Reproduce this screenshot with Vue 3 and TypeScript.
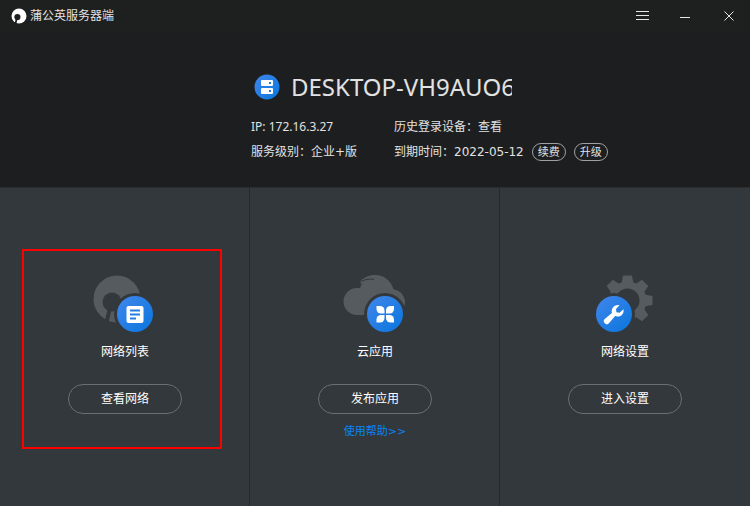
<script setup lang="ts">
interface Panel {
  id: string
  title: string
  action: string
  help?: string
  highlighted?: boolean
}

const hostName = 'DESKTOP-VH9AUO6'

const panels: Panel[] = [
  { id: 'list', title: '网络列表', action: '查看网络', highlighted: true },
  { id: 'cloud', title: '云应用', action: '发布应用', help: '使用帮助>>' },
  { id: 'settings', title: '网络设置', action: '进入设置' },
]

const gearTeeth = [0, 45, 90, 135, 180, 225, 270, 315]
</script>

<template>
  <div class="window">
    <header class="titlebar">
      <svg class="logo" viewBox="0 0 16 16" aria-hidden="true">
        <circle cx="8" cy="8" r="7.5" fill="#fff" />
        <circle cx="6.4" cy="9" r="3.1" fill="#1e2020" />
        <path d="M5.6 11 4.4 16" stroke="#1e2020" stroke-width="1.8" />
      </svg>
      <h1 class="app-name">蒲公英服务器端</h1>
      <nav class="controls" aria-label="窗口">
        <button type="button" aria-label="菜单">
          <svg viewBox="0 0 14 14"><path d="M0 2.5h13M0 6.5h13M0 10.5h13" /></svg>
        </button>
        <button type="button" aria-label="最小化">
          <svg viewBox="0 0 14 14"><path d="M1 8.5h10" /></svg>
        </button>
        <button type="button" aria-label="关闭">
          <svg viewBox="0 0 14 14"><path d="M2.5 2.5l9 9M11.5 2.5l-9 9" /></svg>
        </button>
      </nav>
    </header>

    <section class="host">
      <div class="host-head">
        <svg class="host-icon" viewBox="0 0 26 26" aria-hidden="true">
          <defs>
            <linearGradient id="host-blue" x1="0" y1="0" x2="1" y2="1">
              <stop offset="0" stop-color="#4286ec" />
              <stop offset="1" stop-color="#0876dc" />
            </linearGradient>
          </defs>
          <circle cx="13" cy="13" r="12.5" fill="url(#host-blue)" />
          <rect x="7" y="6" width="12" height="6" rx="1" fill="#fff" />
          <rect x="7" y="14" width="12" height="6" rx="1" fill="#fff" />
          <path d="M15 9h2M15 17h2" stroke="#1c7ae0" stroke-width="2" />
        </svg>
        <h2 class="host-name">{{ hostName }}</h2>
      </div>
      <div class="info">
        <p>IP: 172.16.3.27</p>
        <p>历史登录设备：<a href="#history">查看</a></p>
        <p>服务级别：<span class="wide">企业+版</span></p>
        <p class="expiry">
          <span>到期时间：<time class="wide" datetime="2022-05-12">2022-05-12</time></span>
          <button type="button" class="tag">续费</button>
          <button type="button" class="tag">升级</button>
        </p>
      </div>
    </section>

    <main class="panels">
      <section v-for="panel in panels" :key="panel.id" class="panel">
        <div v-if="panel.highlighted" class="highlight"></div>
        <svg class="panel-icon" viewBox="0 0 70 66" aria-hidden="true">
          <defs>
            <linearGradient :id="`blue-${panel.id}`" x1="0" y1="0" x2="1" y2="1">
              <stop offset="0" stop-color="#4286ec" />
              <stop offset="1" stop-color="#0876dc" />
            </linearGradient>
          </defs>

          <template v-if="panel.id === 'list'">
            <circle class="shape" cx="27" cy="29" r="23.5" />
            <circle class="cut" cx="22" cy="32" r="9.5" />
            <path class="cut-line" d="M20 38 16 54" stroke-width="4" />
            <circle class="cut" cx="45" cy="44" r="21" />
            <circle cx="45" cy="44" r="18" fill="url(#blue-list)" />
            <rect x="36.5" y="36" width="17" height="17" rx="2" fill="#fff" />
            <path d="M40 40.5h10M40 44.5h10M40 48.5h6" stroke="#247de4" stroke-width="2" />
          </template>

          <template v-else-if="panel.id === 'cloud'">
            <path
              class="shape"
              d="M17 45a13.5 13.5 0 0 1 0-27c1 0 2 0 3 .3C22 11 28 5.500 35.500 5.500 44 5.500 51 11 53.500 19.300 60.500 20.500 65 26 65 32.500a13 13 0 0 1-13 12.500z"
            />
            <path class="shape" d="M19 12.500C23 7.500 29 5 35 5c8 0 14 4.500 17 11l-16 4z" />
            <path class="cut-line" d="M18 13.500C23 9.500 29 8.500 34 9.500" stroke-width="1" />
            <circle class="cut" cx="45" cy="44" r="21" />
            <circle cx="45" cy="44" r="18" fill="url(#blue-cloud)" />
            <g fill="#fff">
              <path d="M44.5 43.5h-3.5a4.5 4.5 0 0 1-4.5-4.5v-3h3.5a4.5 4.5 0 0 1 4.5 4.5z" />
              <path d="M46 43.5h3.5a4.5 4.5 0 0 0 4.5-4.5v-3h-3.5a4.5 4.5 0 0 0-4.5 4.5z" />
              <path d="M44.5 45h-3.5a4.5 4.5 0 0 0-4.5 4.5v3h3.5a4.5 4.5 0 0 0 4.5-4.5z" />
              <path d="M46 45h3.5a4.5 4.5 0 0 1 4.5 4.5v3h-3.5a4.5 4.5 0 0 1-4.5-4.5z" />
            </g>
          </template>

          <template v-else>
            <circle class="shape" cx="37.5" cy="30.5" r="19" />
            <path
              v-for="angle in gearTeeth"
              :key="angle"
              class="shape"
              d="M31.5 14 33 5.500h9L43.500 14z"
              :transform="`rotate(${angle} 37.5 30.5)`"
            />
            <circle class="cut" cx="37.5" cy="30.5" r="12" />
            <circle class="cut" cx="24" cy="44" r="21" />
            <circle cx="24" cy="44" r="18" fill="url(#blue-settings)" />
            <path
              fill="#fff"
              d="M29.5 35.2 26 39l.4 3.2 3.2.5 3.8-3.500c1 4-1.900 7.500-6 7.300-.8 0-1.600-.2-2.300-.5L19 53.300a3 3 0 0 1-4.300-4.200l7.200-6.200c-1.100-4.600 2.600-9 7.600-7.700z"
            />
          </template>
        </svg>
        <h3 class="panel-title">{{ panel.title }}</h3>
        <button type="button" class="action">{{ panel.action }}</button>
        <a v-if="panel.help" class="help wide" href="#help">{{ panel.help }}</a>
      </section>
    </main>
  </div>
</template>

<style>
body {
  margin: 0;
  background: #33383c;
}
</style>

<style scoped>
.window {
  display: flex;
  flex-direction: column;
  min-height: 100vh;
  color: #e2e2e2;
  background: #33383c;
  font-family: 'Noto Sans', 'Noto Sans CJK SC', sans-serif;
  font-size: 12px;
  line-height: 20px;
}

h1,
h2,
h3,
p {
  margin: 0;
  font-size: 12px;
  font-weight: 400;
}

button {
  padding: 0;
  border: 0;
  color: inherit;
  background: none;
  font: inherit;
  cursor: pointer;
}

a {
  color: inherit;
  text-decoration: none;
}

.wide {
  font-family: 'DejaVu Sans', 'Noto Sans CJK SC', sans-serif;
}

.titlebar {
  display: flex;
  align-items: center;
  height: 32px;
  padding: 0 14px 0 11px;
  background: #1e2020;
}

.logo {
  width: 16px;
  height: 16px;
  margin-right: 3px;
}

.controls {
  display: flex;
  gap: 29px;
  margin-left: auto;
}

.controls button {
  display: flex;
  width: 14px;
  height: 14px;
}

.controls svg {
  width: 14px;
  height: 14px;
  fill: none;
  stroke: #e6e6e6;
  stroke-width: 1;
}

.host {
  padding: 37px 0 25px 251px;
  background: #1d1e20;
  border-bottom: 1px solid #2a2d30;
}

.host-head {
  display: flex;
  align-items: center;
  gap: 11px;
  padding-left: 3px;
  height: 36px;
}

.host-icon {
  width: 26px;
  height: 26px;
}

.host-name {
  max-width: 221px;
  overflow: hidden;
  font-size: 24px;
  line-height: 36px;
  white-space: nowrap;
}

.info {
  display: grid;
  grid-template-columns: 143px 1fr;
  row-gap: 5px;
  margin-top: 12px;
}

.expiry {
  display: flex;
  align-items: center;
  gap: 8px;
}

.tag {
  box-sizing: border-box;
  width: 34px;
  height: 18px;
  border: 1px solid #a0a0a0;
  border-radius: 9px;
  font-size: 11px;
  line-height: 16px;
}

.panels {
  display: grid;
  flex: 1;
  grid-template-columns: repeat(3, 1fr);
}

.panel {
  position: relative;
  display: flex;
  flex-direction: column;
  align-items: center;
  padding: 82px 0 56px;
}

.panel:not(:last-child) {
  box-shadow: inset -1px 0 #25292c;
}

.highlight {
  position: absolute;
  top: 61px;
  right: 28px;
  bottom: 57px;
  left: 22px;
  border: 2px solid #ff0000;
  pointer-events: none;
}

.panel-icon {
  width: 70px;
  height: 66px;
}

.shape {
  fill: #565b60;
}

.cut {
  fill: #33383c;
}

.cut-line {
  fill: none;
  stroke: #33383c;
}

.panel-title {
  margin-top: 6px;
  color: #fff;
}

.action {
  box-sizing: border-box;
  width: 114px;
  height: 30px;
  margin-top: 22px;
  border: 1px solid #6b6f73;
  border-radius: 15px;
  color: #fff;
}

.help {
  margin-top: 8px;
  color: #0a84f5;
  font-size: 11px;
}
</style>
